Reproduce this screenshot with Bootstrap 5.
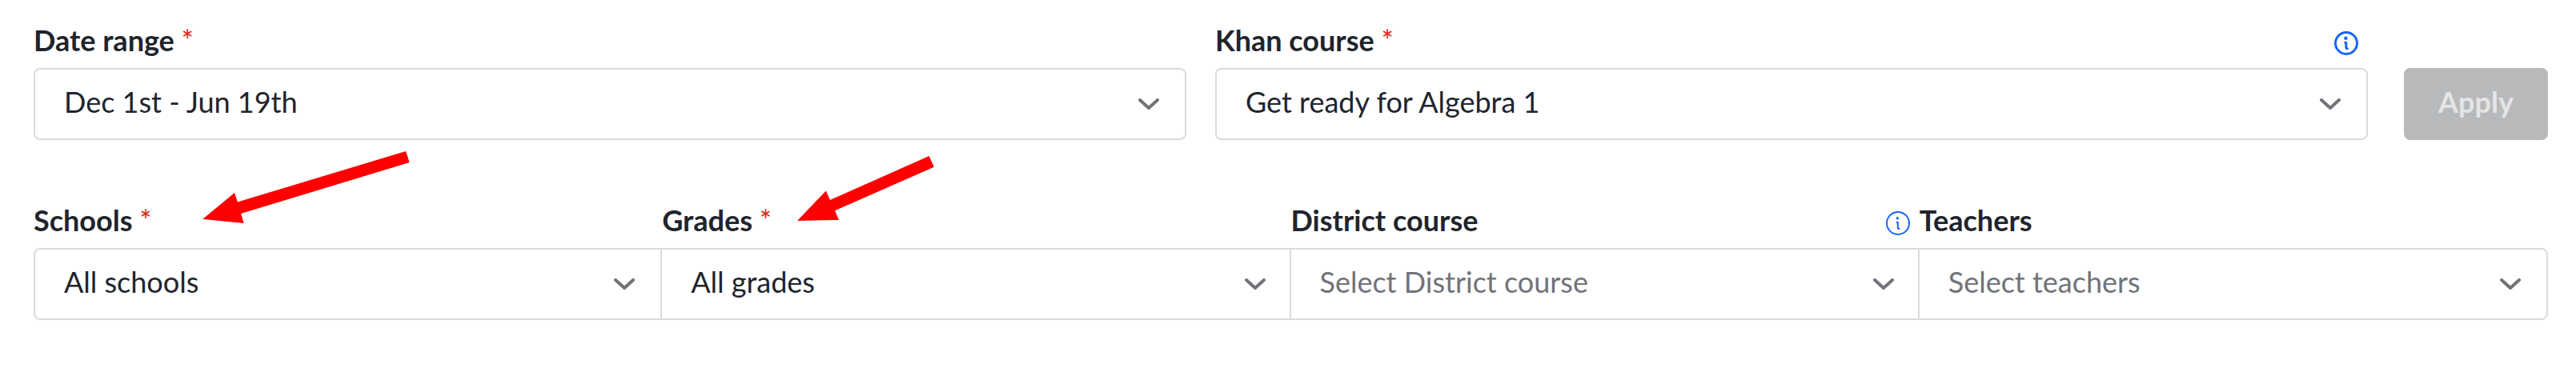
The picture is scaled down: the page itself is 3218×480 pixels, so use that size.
<!DOCTYPE html>
<html lang="en">
<head>
<meta charset="utf-8">
<meta name="viewport" content="width=device-width, initial-scale=1">
<title>Report filters</title>
<link href="https://cdn.jsdelivr.net/npm/bootstrap@5.3.0/dist/css/bootstrap.min.css" rel="stylesheet">
<style>
  body { font-family: Lato, "Open Sans", sans-serif; font-size: 36px; line-height: 44px; color: #21242c; background: #fff; }
  .filters { padding: 28px 35px 0 42px; }
  .filter-row + .filter-row { margin-top: 78px; }
  .row-main { gap: 36px; }
  .field-head { margin-bottom: 13px; }
  .field-head label { font-weight: 700; }
  .required { color: #d92916; font-weight: 400; }
  .filter-select {
    height: 90px; border: 2px solid #d9dadb; border-radius: 8px;
    padding: 0 80px 6px 36px; font-size: 36px; line-height: 44px; color: #21242c;
    background-image: url("data:image/svg+xml,%3Csvg xmlns='http://www.w3.org/2000/svg' viewBox='0 0 26 14'%3E%3Cpath d='M2 2l11 10L24 2' fill='none' stroke='%23717379' stroke-width='4' stroke-linecap='round' stroke-linejoin='round'/%3E%3C/svg%3E");
    background-size: 26px 14px; background-position: right 32px center;
  }
  .unset { color: #717379; }
  .joined .col .filter-select { border-radius: 0; }
  .joined .col:not(:first-child) .filter-select { border-left: 0; }
  .joined .col:not(:first-child):not(:last-child) .filter-select { background-position: right 30px center; }
  .joined .col:first-child .filter-select { border-radius: 8px 0 0 8px; }
  .joined .col:last-child .filter-select { border-radius: 0 8px 8px 0; }
  .info-btn { color: #1865f2; padding: 8px 12px 0 0; line-height: 0; }
  .info-btn svg { width: 30px; height: 30px; }
  .apply-btn, .apply-btn:disabled {
    width: 180px; height: 90px; margin-left: 9px; padding: 0 0 6px; border: 0; border-radius: 8px;
    background: #b8b9bb; color: #e4e5e6; opacity: 1; font-size: 36px; line-height: 44px; font-weight: 700;
  }
  .pointer { position: absolute; pointer-events: none; fill: #f00; }
  .pointer-schools { left: 211px; top: -64px; width: 259px; height: 91px; }
  .pointer-grades { left: 169px; top: -58px; width: 171px; height: 82px; }
</style>
</head>
<body>
<form class="filters">
  <div class="filter-row row-main d-flex align-items-end">
    <div class="flex-fill w-50">
      <div class="field-head d-flex"><label for="range">Date range <span class="required">*</span></label></div>
      <select id="range" class="form-select filter-select"><option>Dec 1st - Jun 19th</option></select>
    </div>
    <div class="flex-fill w-50">
      <div class="field-head d-flex justify-content-between">
        <label for="khan">Khan course <span class="required">*</span></label>
        <button type="button" class="btn border-0 info-btn" aria-label="About Khan course">
          <svg viewBox="0 0 30 30" fill="none" stroke="currentColor" stroke-linecap="round" stroke-linejoin="round"><circle cx="15" cy="15" r="13.5" stroke-width="3"/><circle cx="14.4" cy="8.8" r="2.2" fill="currentColor" stroke="none"/><path d="M13.8 14.2h1v5.200q0 2.300 1.500 2.300" stroke-width="3"/></svg>
        </button>
      </div>
      <select id="khan" class="form-select filter-select"><option>Get ready for Algebra 1</option></select>
    </div>
    <button type="submit" class="btn apply-btn flex-shrink-0" disabled>Apply</button>
  </div>

  <div class="filter-row joined row g-0">
    <div class="col position-relative">
      <div class="field-head d-flex"><label for="schools">Schools <span class="required">*</span></label></div>
      <select id="schools" class="form-select filter-select"><option>All schools</option></select>
      <svg class="pointer pointer-schools" viewBox="253 189 259 91" aria-hidden="true"><path d="M253 274L293 241l3.800 11.500L507 189l4.500 14L301 267l3.500 12z"/></svg>
    </div>
    <div class="col position-relative">
      <div class="field-head d-flex"><label for="grades">Grades <span class="required">*</span></label></div>
      <select id="grades" class="form-select filter-select"><option>All grades</option></select>
      <svg class="pointer pointer-grades" viewBox="996 195 171 82" aria-hidden="true"><path d="M996 276l35.800-37.500L1037 250l123.700-55 6.100 13.700L1043 263.300l5 11.700z"/></svg>
    </div>
    <div class="col">
      <div class="field-head d-flex justify-content-between">
        <label for="district">District course</label>
        <button type="button" class="btn border-0 info-btn" aria-label="About District course">
          <svg viewBox="0 0 30 30" fill="none" stroke="currentColor" stroke-linecap="round" stroke-linejoin="round"><circle cx="15" cy="15" r="14" stroke-width="2"/><circle cx="14.400" cy="8.800" r="1.700" fill="currentColor" stroke="none"/><path d="M13.500 14h1.300v5.800q0 2.300 1.800 2.300" stroke-width="2"/></svg>
        </button>
      </div>
      <select id="district" class="form-select filter-select unset"><option>Select District course</option></select>
    </div>
    <div class="col">
      <div class="field-head d-flex"><label for="teachers">Teachers</label></div>
      <select id="teachers" class="form-select filter-select unset"><option>Select teachers</option></select>
    </div>
  </div>
</form>
<script src="https://cdn.jsdelivr.net/npm/bootstrap@5.3.0/dist/js/bootstrap.bundle.min.js"></script>
</body>
</html>
